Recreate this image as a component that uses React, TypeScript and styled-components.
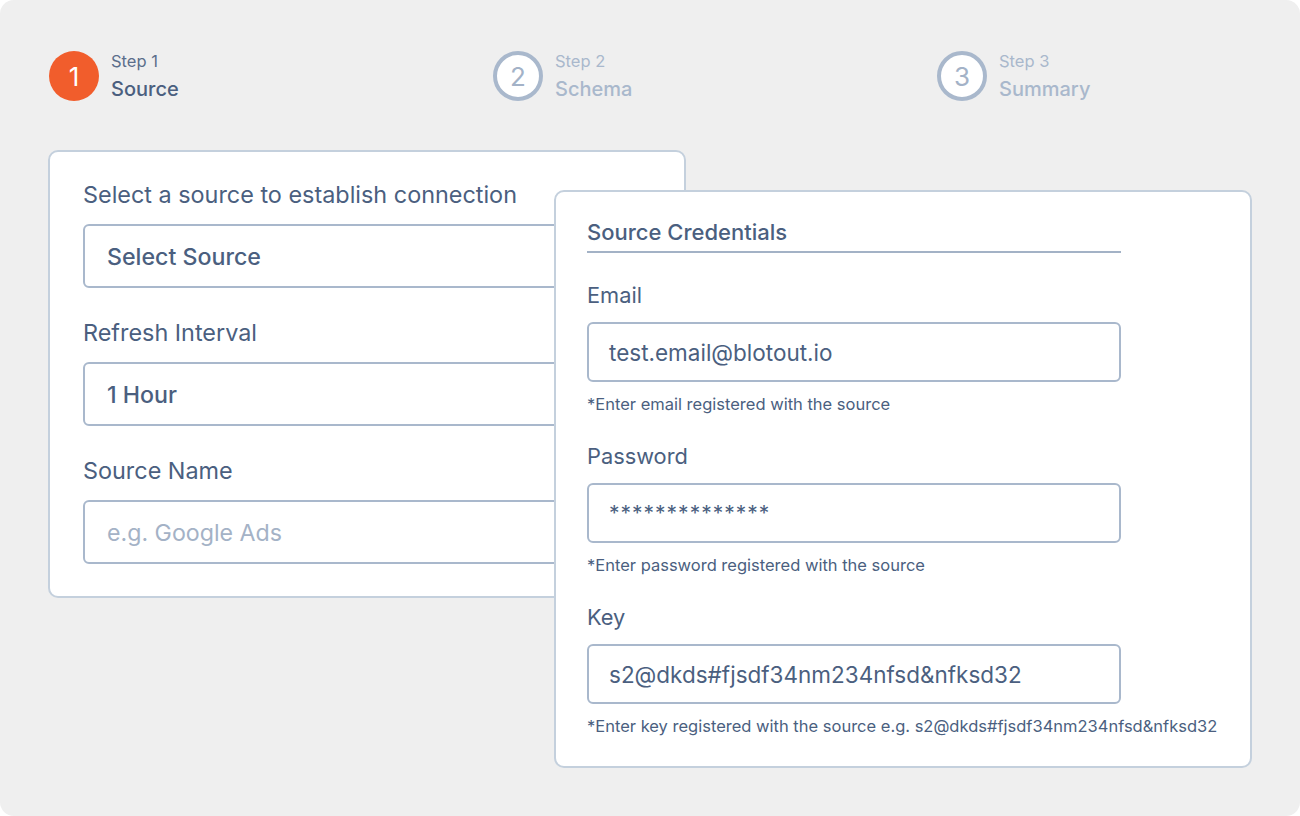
import React from "react";
import styled, { createGlobalStyle } from "styled-components";

const GlobalStyle = createGlobalStyle`
  html, body { margin: 0; padding: 0; background: #ffffff; }
  body { font-family: Inter, "Noto Sans", "Liberation Sans", sans-serif; }
  * { box-sizing: border-box; }
`;

const Page = styled.div`
  width: 1300px;
  height: 816px;
  background: #efefef;
  border-radius: 14px;
  padding: 50px 0 0 48px;
  overflow: hidden;
`;

const Steps = styled.div`
  display: grid;
  grid-template-columns: repeat(3, 444px);
  padding-left: 1px;
  height: 50px;
`;

const Step = styled.div`
  display: flex;
  align-items: center;
  gap: 12px;
`;

const Circle = styled.div<{ $active?: boolean }>`
  width: 50px;
  height: 50px;
  border-radius: 50%;
  display: flex;
  align-items: center;
  justify-content: center;
  font-size: 26px;
  font-weight: 400;
  background: ${(p) => (p.$active ? "#f15d2c" : "#ffffff")};
  color: ${(p) => (p.$active ? "#ffffff" : "#a3b2c7")};
  border: ${(p) => (p.$active ? "none" : "4px solid #a9b8cc")};
`;

const StepText = styled.div`
  display: flex;
  flex-direction: column;
  gap: 5px;
  margin-top: 1px;
`;

const StepNum = styled.span<{ $active?: boolean }>`
  font-size: 16.5px;
  line-height: 20px;
  color: ${(p) => (p.$active ? "#5b6e8b" : "#a9b8cc")};
`;

const StepName = styled.span<{ $active?: boolean }>`
  font-size: 20px;
  line-height: 26px;
  font-weight: 500;
  color: ${(p) => (p.$active ? "#4b5f7f" : "#a9b8cc")};
`;

const Stage = styled.div`
  position: relative;
  margin-top: 50px;
`;

const Card = styled.div`
  background: #ffffff;
  border: 2px solid #c4d0dd;
  border-radius: 10px;
`;

const SourceCard = styled(Card)`
  width: 638px;
  height: 448px;
  padding: 29px 33px 0 33px;
  display: flex;
  flex-direction: column;
  gap: 31px;
`;

const CredCard = styled(Card)`
  position: absolute;
  left: 506px;
  top: 40px;
  width: 698px;
  height: 578px;
  padding: 28px 31px 0 31px;
`;

const Field = styled.div`
  display: flex;
  flex-direction: column;
`;

const BigLabel = styled.label`
  font-size: 23.4px;
  line-height: 28px;
  color: #4b5f7f;
  margin-bottom: 15px;
`;

const BigInput = styled.div<{ $placeholder?: boolean }>`
  height: 64px;
  width: 568px;
  border: 2px solid #a9b8cc;
  border-radius: 6px;
  padding-left: 22px;
  padding-top: 2px;
  display: flex;
  align-items: center;
  font-size: 23.2px;
  font-weight: ${(p) => (p.$placeholder ? 400 : 500)};
  color: ${(p) => (p.$placeholder ? "#a4b2c6" : "#4b5f7f")};
`;

const Heading = styled.div`
  width: 534px;
  font-size: 22px;
  line-height: 24px;
  font-weight: 500;
  color: #4b5f7f;
  padding-bottom: 7px;
  border-bottom: 2px solid #a3b2c6;
  margin-bottom: 30px;
`;

const CredField = styled.div`
  display: flex;
  flex-direction: column;
  margin-bottom: 31px;
`;

const Label = styled.label`
  font-size: 21.8px;
  line-height: 24px;
  color: #4b5f7f;
  margin-bottom: 15px;
`;

const Input = styled.div<{ $secret?: boolean }>`
  width: 534px;
  height: 60px;
  border: 2px solid #a9b8cc;
  border-radius: 6px;
  padding-left: 20px;
  display: flex;
  align-items: center;
  font-size: ${(p) => (p.$secret ? "21px" : "22.5px")};
  font-weight: 400;
  color: #4b5f7f;
  letter-spacing: ${(p) => (p.$secret ? "1px" : "0")};
`;

const Help = styled.div`
  font-size: 16.5px;
  line-height: 18px;
  color: #4b5f7f;
  margin-top: 13px;
  white-space: nowrap;
`;

const steps = [
  { n: 1, name: "Source" },
  { n: 2, name: "Schema" },
  { n: 3, name: "Summary" },
];

const creds = [
  { label: "Email", value: "test.email@blotout.io", help: "*Enter email registered with the source" },
  { label: "Password", value: "**************", help: "*Enter password registered with the source", secret: true },
  {
    label: "Key",
    value: "s2@dkds#fjsdf34nm234nfsd&nfksd32",
    help: "*Enter key registered with the source e.g. s2@dkds#fjsdf34nm234nfsd&nfksd32",
  },
];

export default function App() {
  return (
    <>
      <GlobalStyle />
      <Page>
        <Steps>
          {steps.map((s, i) => (
            <Step key={s.n}>
              <Circle $active={i === 0}>{s.n}</Circle>
              <StepText>
                <StepNum $active={i === 0}>Step {s.n}</StepNum>
                <StepName $active={i === 0}>{s.name}</StepName>
              </StepText>
            </Step>
          ))}
        </Steps>
        <Stage>
          <SourceCard>
            <Field>
              <BigLabel>Select a source to establish connection</BigLabel>
              <BigInput>Select Source</BigInput>
            </Field>
            <Field>
              <BigLabel>Refresh Interval</BigLabel>
              <BigInput>1 Hour</BigInput>
            </Field>
            <Field>
              <BigLabel>Source Name</BigLabel>
              <BigInput $placeholder>e.g. Google Ads</BigInput>
            </Field>
          </SourceCard>
          <CredCard>
            <Heading>Source Credentials</Heading>
            {creds.map((c) => (
              <CredField key={c.label}>
                <Label>{c.label}</Label>
                <Input $secret={c.secret}>{c.value}</Input>
                <Help>{c.help}</Help>
              </CredField>
            ))}
          </CredCard>
        </Stage>
      </Page>
    </>
  );
}
